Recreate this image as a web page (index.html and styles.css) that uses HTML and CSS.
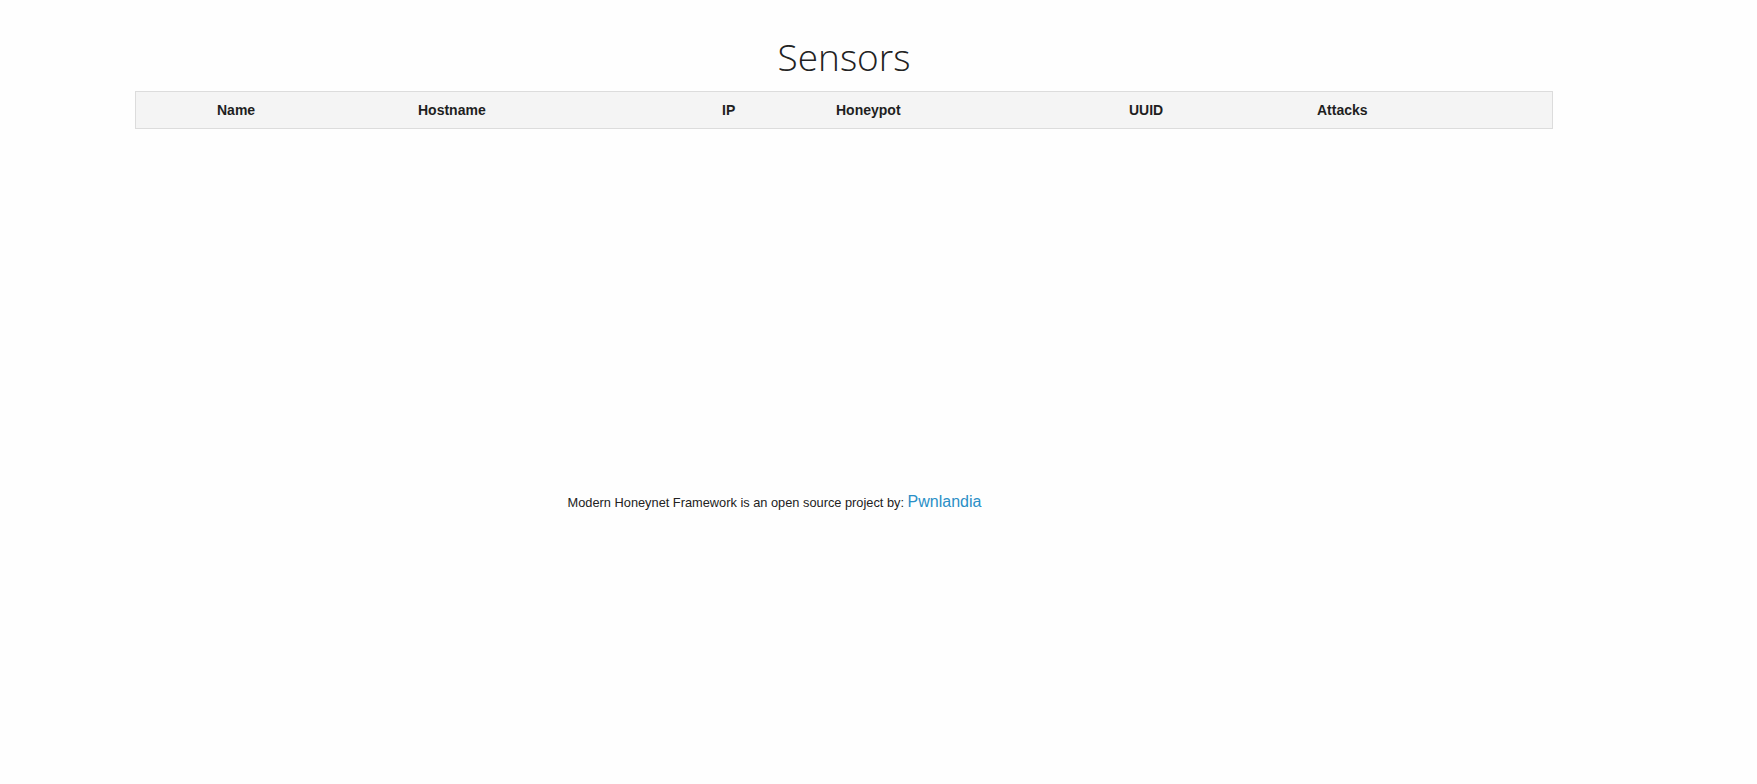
FILE: index.html
```html
<!DOCTYPE html>
<html lang="en">
<head>
<meta charset="utf-8">
<title>Sensors</title>
<link rel="stylesheet" href="styles.css">
</head>
<body>
<div class="page">
  <h1 class="title">Sensors</h1>
  <div class="table">
    <div class="thead">
      <div class="th">Name</div>
      <div class="th">Hostname</div>
      <div class="th">IP</div>
      <div class="th">Honeypot</div>
      <div class="th">UUID</div>
      <div class="th">Attacks</div>
    </div>
  </div>
</div>
<footer class="footer">
  Modern Honeynet Framework is an open source project by: <a class="link" href="#">Pwnlandia</a>
</footer>
</body>
</html>
```
FILE: styles.css
```css
html {
  background: #fefefe;
}
body {
  margin: 0;
  font-family: "Liberation Sans", Arial, sans-serif;
  color: #222;
}
.page {
  margin-left: 135px;
  width: 1418px;
  padding-top: 35px;
}
.title {
  margin: 0 0 12px 0;
  font-family: "Open Sans", sans-serif;
  font-weight: 300;
  font-size: 37px;
  line-height: 44px;
  text-align: center;
  color: #222;
}
.table {
  border: 1px solid #dcdcdc;
  background: #f4f4f4;
}
.thead {
  display: grid;
  grid-template-columns: 201px 304px 114px 293px 188px 1fr;
  padding-left: 81px;
  height: 36px;
}
.th {
  font-size: 14px;
  font-weight: bold;
  line-height: 36px;
  color: #1f1f1f;
}
.footer {
  margin-left: 135px;
  width: 1279px;
  margin-top: 363px;
  text-align: center;
  font-size: 12.8px;
  line-height: 20px;
  color: #222;
}
.link {
  font-size: 16px;
  color: #2a8fc6;
  text-decoration: none;
}
```
